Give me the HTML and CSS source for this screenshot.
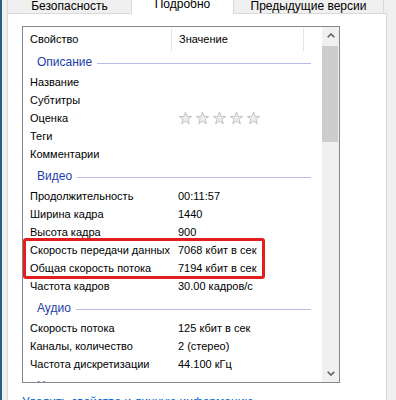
FILE: index.html
```html
<!DOCTYPE html>
<html>
<head lang="ru">
    <meta charset="UTF-8">
    <title>Свойства</title>
    <link rel="stylesheet" href="styles.css">
</head>
<body>
<div class="dialog">
    <div class="tabs">
        <div class="tab">Безопасность</div>
        <div class="tab tab-active">Подробно</div>
        <div class="tab tab-last">Предыдущие версии</div>
    </div>
    <div class="panel">
        <div class="listbox">
            <div class="list-main">
                <div class="list-head">
                    <div class="col-name">Свойство</div>
                    <div class="col-value">Значение</div>
                </div>

                <div class="group group-first"><span>Описание</span><i></i></div>
                <div class="row"><div class="col-name">Название</div><div class="col-value"></div></div>
                <div class="row"><div class="col-name">Субтитры</div><div class="col-value"></div></div>
                <div class="row">
                    <div class="col-name">Оценка</div>
                    <div class="col-value stars">
                        <svg viewBox="-1 -1 15 15"><polygon points="6.5,0 8.03,4.4 12.68,4.49 8.97,7.3 10.32,11.76 6.5,9.1 2.68,11.76 4.03,7.3 0.32,4.49 4.97,4.4"/></svg>
                        <svg viewBox="-1 -1 15 15"><polygon points="6.5,0 8.03,4.4 12.68,4.49 8.97,7.3 10.32,11.76 6.5,9.1 2.68,11.76 4.03,7.3 0.32,4.49 4.97,4.4"/></svg>
                        <svg viewBox="-1 -1 15 15"><polygon points="6.5,0 8.03,4.4 12.68,4.49 8.97,7.3 10.32,11.76 6.5,9.1 2.68,11.76 4.03,7.3 0.32,4.49 4.97,4.4"/></svg>
                        <svg viewBox="-1 -1 15 15"><polygon points="6.5,0 8.03,4.4 12.68,4.49 8.97,7.3 10.32,11.76 6.5,9.1 2.68,11.76 4.03,7.3 0.32,4.49 4.97,4.4"/></svg>
                        <svg viewBox="-1 -1 15 15"><polygon points="6.5,0 8.03,4.4 12.68,4.49 8.97,7.3 10.32,11.76 6.5,9.1 2.68,11.76 4.03,7.3 0.32,4.49 4.97,4.4"/></svg>
                    </div>
                </div>
                <div class="row"><div class="col-name">Теги</div><div class="col-value"></div></div>
                <div class="row"><div class="col-name">Комментарии</div><div class="col-value"></div></div>

                <div class="group"><span>Видео</span><i></i></div>
                <div class="row"><div class="col-name">Продолжительность</div><div class="col-value">00:11:57</div></div>
                <div class="row"><div class="col-name">Ширина кадра</div><div class="col-value">1440</div></div>
                <div class="row"><div class="col-name">Высота кадра</div><div class="col-value">900</div></div>
                <div class="highlight">
                    <div class="row"><div class="col-name">Скорость передачи данных</div><div class="col-value">7068 кбит в сек</div></div>
                    <div class="row"><div class="col-name">Общая скорость потока</div><div class="col-value">7194 кбит в сек</div></div>
                </div>
                <div class="row"><div class="col-name">Частота кадров</div><div class="col-value">30.00 кадров/с</div></div>

                <div class="group"><span>Аудио</span><i></i></div>
                <div class="row"><div class="col-name">Скорость потока</div><div class="col-value">125 кбит в сек</div></div>
                <div class="row"><div class="col-name">Каналы, количество</div><div class="col-value">2 (стерео)</div></div>
                <div class="row"><div class="col-name">Частота дискретизации</div><div class="col-value">44.100 кГц</div></div>

                <div class="group"><span>Носитель</span><i></i></div>
            </div>
            <div class="scrollbar">
                <div class="scroll-btn">
                    <svg viewBox="0 0 8 5"><polyline points="0.7,4.3 4,1 7.3,4.3"/></svg>
                </div>
                <div class="scroll-track"><div class="scroll-thumb"></div></div>
                <div class="scroll-btn">
                    <svg viewBox="0 0 8 5"><polyline points="0.7,0.7 4,4 7.3,0.7"/></svg>
                </div>
            </div>
        </div>
        <a class="clear-link" href="#">Удалить свойства и личную информацию</a>
    </div>
</div>
</body>
</html>
```

FILE: styles.css
```css
html, body {
    margin: 0;
    height: 100%;
}
body {
    background: #f0f0f0;
    border-left: 2px solid #2b5d7e;
    overflow: hidden;
    font: 11px/15px "Liberation Sans", Arial, sans-serif;
    color: #000;
}
.dialog {
    padding: 0 9px 0 5px;
}

/* tabs */
.tabs {
    display: flex;
    align-items: flex-end;
    margin-top: -10px;
    font-size: 12px;
}
.tab {
    box-sizing: border-box;
    height: 21px;
    padding-top: 6px;
    text-align: center;
    background: #f0f0f0;
    border: 1px solid #d9d9d9;
    border-bottom: 0;
    border-right: 0;
    width: 124px;
}
.tab-active {
    position: relative;
    z-index: 1;
    width: 102px;
    height: 24px;
    margin-bottom: -1px;
    background: #fff;
}
.tab-last {
    width: 151px;
    border-right: 1px solid #d9d9d9;
}

/* panel */
.panel {
    background: #fff;
    border: 1px solid #d9d9d9;
    height: 420px;
    padding: 12px 0 0 14px;
}
.listbox {
    box-sizing: border-box;
    width: 318px;
    height: 357px;
    border: 1px solid #828790;
    display: flex;
}
.list-main {
    flex: 1;
    overflow: hidden;
}
.list-head {
    display: flex;
    height: 25px;
    align-items: center;
}
.list-head .col-name {
    width: 141px;
    border-right: 1px solid #e5e5e5;
    height: 23px;
    line-height: 23px;
}
.list-head .col-value {
    width: 124px;
    border-right: 1px solid #e5e5e5;
    height: 23px;
    line-height: 23px;
}
.col-name {
    width: 141px;
    padding-left: 7px;
    white-space: nowrap;
}
.col-value {
    padding-left: 7px;
    white-space: nowrap;
}
.row {
    display: flex;
    height: 18px;
    align-items: center;
}

.group {
    display: flex;
    align-items: center;
    height: 21px;
    padding-top: 3px;
    color: #2140a9;
    font-size: 12px;
}
.group-first {
    height: 21px;
    padding-top: 0;
}
.group span {
    padding-left: 14px;
}
.group i {
    flex: 1;
    height: 1px;
    background: #b7bde4;
    margin: 1px 11px 0 5px;
}

.stars {
    display: flex;
    gap: 2px;
}
.stars svg {
    width: 15px;
    height: 15px;
}
.stars polygon {
    fill: #ededed;
    stroke: #c3c3c3;
    stroke-width: 1;
    stroke-linejoin: round;
}

.highlight {
    position: relative;
}
.highlight::after {
    content: "";
    position: absolute;
    left: 0;
    top: -3px;
    bottom: -2px;
    width: 242px;
    box-sizing: border-box;
    border: 3px solid #e41d1f;
    border-radius: 3px;
}

/* scrollbar */
.scrollbar {
    width: 17px;
    background: #f0f0f0;
    display: flex;
    flex-direction: column;
}
.scroll-btn {
    height: 17px;
    display: flex;
    align-items: center;
    justify-content: center;
}
.scroll-btn svg {
    width: 8px;
    height: 5px;
}
.scroll-btn polyline {
    fill: none;
    stroke: #606060;
    stroke-width: 1.6;
}
.scroll-track {
    flex: 1;
    padding: 2px 1px 0 0;
}
.scroll-thumb {
    height: 96px;
    background: #cdcdcd;
}

.clear-link {
    display: block;
    margin-top: 12px;
    color: #0066cc;
    text-decoration: none;
    font-size: 12px;
}
```
